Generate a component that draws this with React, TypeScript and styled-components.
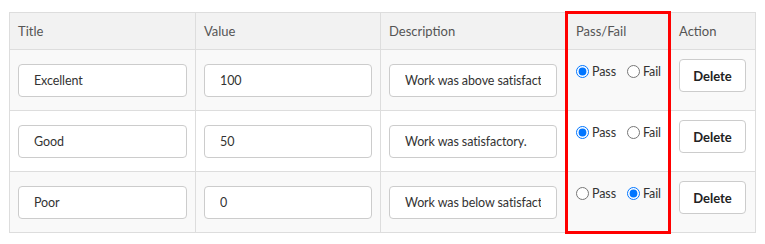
import React, { useState } from 'react';
import styled, { createGlobalStyle, css } from 'styled-components';

const GlobalStyle = createGlobalStyle`
  body {
    margin: 0;
    background: #fff;
    font-family: Lato, "Open Sans", sans-serif;
  }
`;

const Page = styled.div`
  padding: 11px 0 0 9px;
`;

const Table = styled.table`
  border-collapse: collapse;
  table-layout: fixed;
  width: 746px;
  font-size: 13px;
  color: #333;
`;

const HeadCell = styled.th<{ $highlight?: boolean }>`
  text-align: left;
  font-weight: 400;
  color: #555;
  background: #f2f2f2;
  border: 1px solid #dddddd;
  padding: 7px 8px 8px;
  line-height: 20px;
  ${(p) =>
    p.$highlight &&
    css`
      border: 3px solid #ff0000;
      border-bottom: 1px solid #dddddd;
    `}
`;

const Row = styled.tr<{ $striped: boolean }>`
  background: ${(p) => (p.$striped ? '#f9f9f9' : '#ffffff')};
`;

const Cell = styled.td<{ $highlight?: boolean; $last?: boolean }>`
  border: 1px solid #dddddd;
  padding: 8px;
  vertical-align: top;
  ${(p) =>
    p.$highlight &&
    css`
      border-left: 3px solid #ff0000;
      border-right: 3px solid #ff0000;
    `}
  ${(p) =>
    p.$highlight &&
    p.$last &&
    css`
      border-bottom: 3px solid #ff0000;
    `}
`;

const TextInput = styled.input`
  display: block;
  box-sizing: border-box;
  width: 100%;
  height: 33px;
  margin: 6px 0 5px;
  padding: 0 15px;
  border: 1px solid #cccccc;
  border-radius: 4px;
  background: #fff;
  font-family: inherit;
  font-size: 12.5px;
  letter-spacing: -0.1px;
  color: #333;
  outline: none;
`;

const RadioGroup = styled.div`
  display: flex;
  align-items: center;
  gap: 11px;
  margin-top: 6px;
  font-size: 12.5px;
  letter-spacing: -0.1px;
  color: #333;
`;

const RadioLabel = styled.label`
  display: flex;
  align-items: center;
  gap: 3px;
  cursor: pointer;
`;

const Radio = styled.input`
  margin: 0;
  width: 13px;
  height: 13px;
`;

const DeleteButton = styled.button`
  display: block;
  box-sizing: border-box;
  width: 67px;
  height: 33px;
  margin-top: 1px;
  border: 1px solid #cccccc;
  border-radius: 4px;
  background: #fff;
  font-family: inherit;
  font-size: 13px;
  font-weight: 700;
  color: #222;
  cursor: pointer;
`;

type Grade = { title: string; value: string; description: string; pass: boolean };

const initial: Grade[] = [
  { title: 'Excellent', value: '100', description: 'Work was above satisfactory.', pass: true },
  { title: 'Good', value: '50', description: 'Work was satisfactory.', pass: true },
  { title: 'Poor', value: '0', description: 'Work was below satisfactory.', pass: false },
];

export default function App() {
  const [rows, setRows] = useState<Grade[]>(initial);

  const update = (i: number, patch: Partial<Grade>) =>
    setRows((r) => r.map((g, idx) => (idx === i ? { ...g, ...patch } : g)));

  return (
    <Page>
      <GlobalStyle />
      <Table>
        <colgroup>
          <col style={{ width: 186 }} />
          <col style={{ width: 185 }} />
          <col style={{ width: 186 }} />
          <col style={{ width: 103 }} />
          <col style={{ width: 86 }} />
        </colgroup>
        <thead>
          <tr>
            <HeadCell>Title</HeadCell>
            <HeadCell>Value</HeadCell>
            <HeadCell>Description</HeadCell>
            <HeadCell $highlight>Pass/Fail</HeadCell>
            <HeadCell>Action</HeadCell>
          </tr>
        </thead>
        <tbody>
          {rows.map((g, i) => (
            <Row key={i} $striped={i % 2 === 0}>
              <Cell>
                <TextInput value={g.title} onChange={(e) => update(i, { title: e.target.value })} />
              </Cell>
              <Cell>
                <TextInput value={g.value} onChange={(e) => update(i, { value: e.target.value })} />
              </Cell>
              <Cell>
                <TextInput
                  value={g.description}
                  onChange={(e) => update(i, { description: e.target.value })}
                />
              </Cell>
              <Cell $highlight $last={i === rows.length - 1}>
                <RadioGroup>
                  <RadioLabel>
                    <Radio
                      type="radio"
                      name={`pf-${i}`}
                      checked={g.pass}
                      onChange={() => update(i, { pass: true })}
                    />
                    Pass
                  </RadioLabel>
                  <RadioLabel>
                    <Radio
                      type="radio"
                      name={`pf-${i}`}
                      checked={!g.pass}
                      onChange={() => update(i, { pass: false })}
                    />
                    Fail
                  </RadioLabel>
                </RadioGroup>
              </Cell>
              <Cell>
                <DeleteButton onClick={() => setRows((r) => r.filter((_, idx) => idx !== i))}>
                  Delete
                </DeleteButton>
              </Cell>
            </Row>
          ))}
        </tbody>
      </Table>
    </Page>
  );
}
